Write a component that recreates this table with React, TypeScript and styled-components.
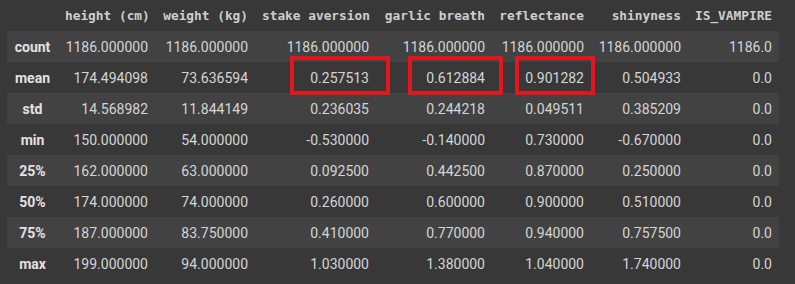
import styled, { createGlobalStyle } from "styled-components";

const GlobalStyle = createGlobalStyle`
  html, body {
    margin: 0;
    padding: 0;
    background: #383838;
  }
`;

const Frame = styled.div`
  width: 795px;
  height: 284px;
  background: #383838;
  padding-left: 7px;
  box-sizing: border-box;
  overflow: hidden;
`;

const Table = styled.table`
  border-collapse: collapse;
  border-spacing: 0;
  table-layout: fixed;
  width: 772px;
  color: #d5d5d5;
  font-family: Roboto, "Liberation Sans", sans-serif;
  font-size: 14px;
`;

const HeadCell = styled.th`
  height: 31px;
  padding: 0 7px;
  text-align: right;
  font-family: "DejaVu Sans Mono", "Liberation Mono", monospace;
  font-size: 12.8px;
  font-weight: bold;
  color: #cfcfcf;
  white-space: nowrap;
  vertical-align: middle;
`;

const Row = styled.tr<{ $striped: boolean }>`
  height: 31px;
  background: ${(p) => (p.$striped ? "#424242" : "transparent")};
`;

const IndexCell = styled.th`
  padding: 0 7px;
  text-align: center;
  font-weight: bold;
  color: #e2e2e2;
  white-space: nowrap;
`;

const Cell = styled.td`
  position: relative;
  padding: 0 7px;
  text-align: right;
  white-space: nowrap;
`;

// red annotation drawn over a cell
const Marker = styled.span<{ $left: number; $right: number }>`
  position: absolute;
  top: -6px;
  bottom: -2px;
  left: ${(p) => p.$left}px;
  right: ${(p) => p.$right}px;
  border: 4px solid #e3151d;
  pointer-events: none;
`;

const columns = [
  { name: "", width: 51 },
  { name: "height (cm)", width: 97 },
  { name: "weight (kg)", width: 100 },
  { name: "stake aversion", width: 121 },
  { name: "garlic breath", width: 116 },
  { name: "reflectance", width: 99 },
  { name: "shinyness", width: 97 },
  { name: "IS_VAMPIRE", width: 91 },
];

const rows: [string, string[]][] = [
  ["count", ["1186.000000", "1186.000000", "1186.000000", "1186.000000", "1186.000000", "1186.000000", "1186.0"]],
  ["mean", ["174.494098", "73.636594", "0.257513", "0.612884", "0.901282", "0.504933", "0.0"]],
  ["std", ["14.568982", "11.844149", "0.236035", "0.244218", "0.049511", "0.385209", "0.0"]],
  ["min", ["150.000000", "54.000000", "-0.530000", "-0.140000", "0.730000", "-0.670000", "0.0"]],
  ["25%", ["162.000000", "63.000000", "0.092500", "0.442500", "0.870000", "0.250000", "0.0"]],
  ["50%", ["174.000000", "74.000000", "0.260000", "0.600000", "0.900000", "0.510000", "0.0"]],
  ["75%", ["187.000000", "83.750000", "0.410000", "0.770000", "0.940000", "0.757500", "0.0"]],
  ["max", ["199.000000", "94.000000", "1.030000", "1.380000", "1.040000", "1.740000", "0.0"]],
];

// highlighted cells in the "mean" row, keyed by column index
const markers: Record<number, { left: number; right: number }> = {
  2: { left: 35, right: -14 },
  3: { left: 32, right: -11 },
  4: { left: 23, right: -4 },
};

export default function App() {
  return (
    <>
      <GlobalStyle />
      <Frame>
        <Table>
          <colgroup>
            {columns.map((c, i) => (
              <col key={i} style={{ width: c.width }} />
            ))}
          </colgroup>
          <thead>
            <tr>
              {columns.map((c, i) => (
                <HeadCell key={i}>{c.name}</HeadCell>
              ))}
            </tr>
          </thead>
          <tbody>
            {rows.map(([label, values], r) => (
              <Row key={label} $striped={r % 2 === 0}>
                <IndexCell>{label}</IndexCell>
                {values.map((v, i) => {
                  const m = label === "mean" ? markers[i] : undefined;
                  return (
                    <Cell key={i}>
                      {v}
                      {m && <Marker $left={m.left} $right={m.right} />}
                    </Cell>
                  );
                })}
              </Row>
            ))}
          </tbody>
        </Table>
      </Frame>
    </>
  );
}
